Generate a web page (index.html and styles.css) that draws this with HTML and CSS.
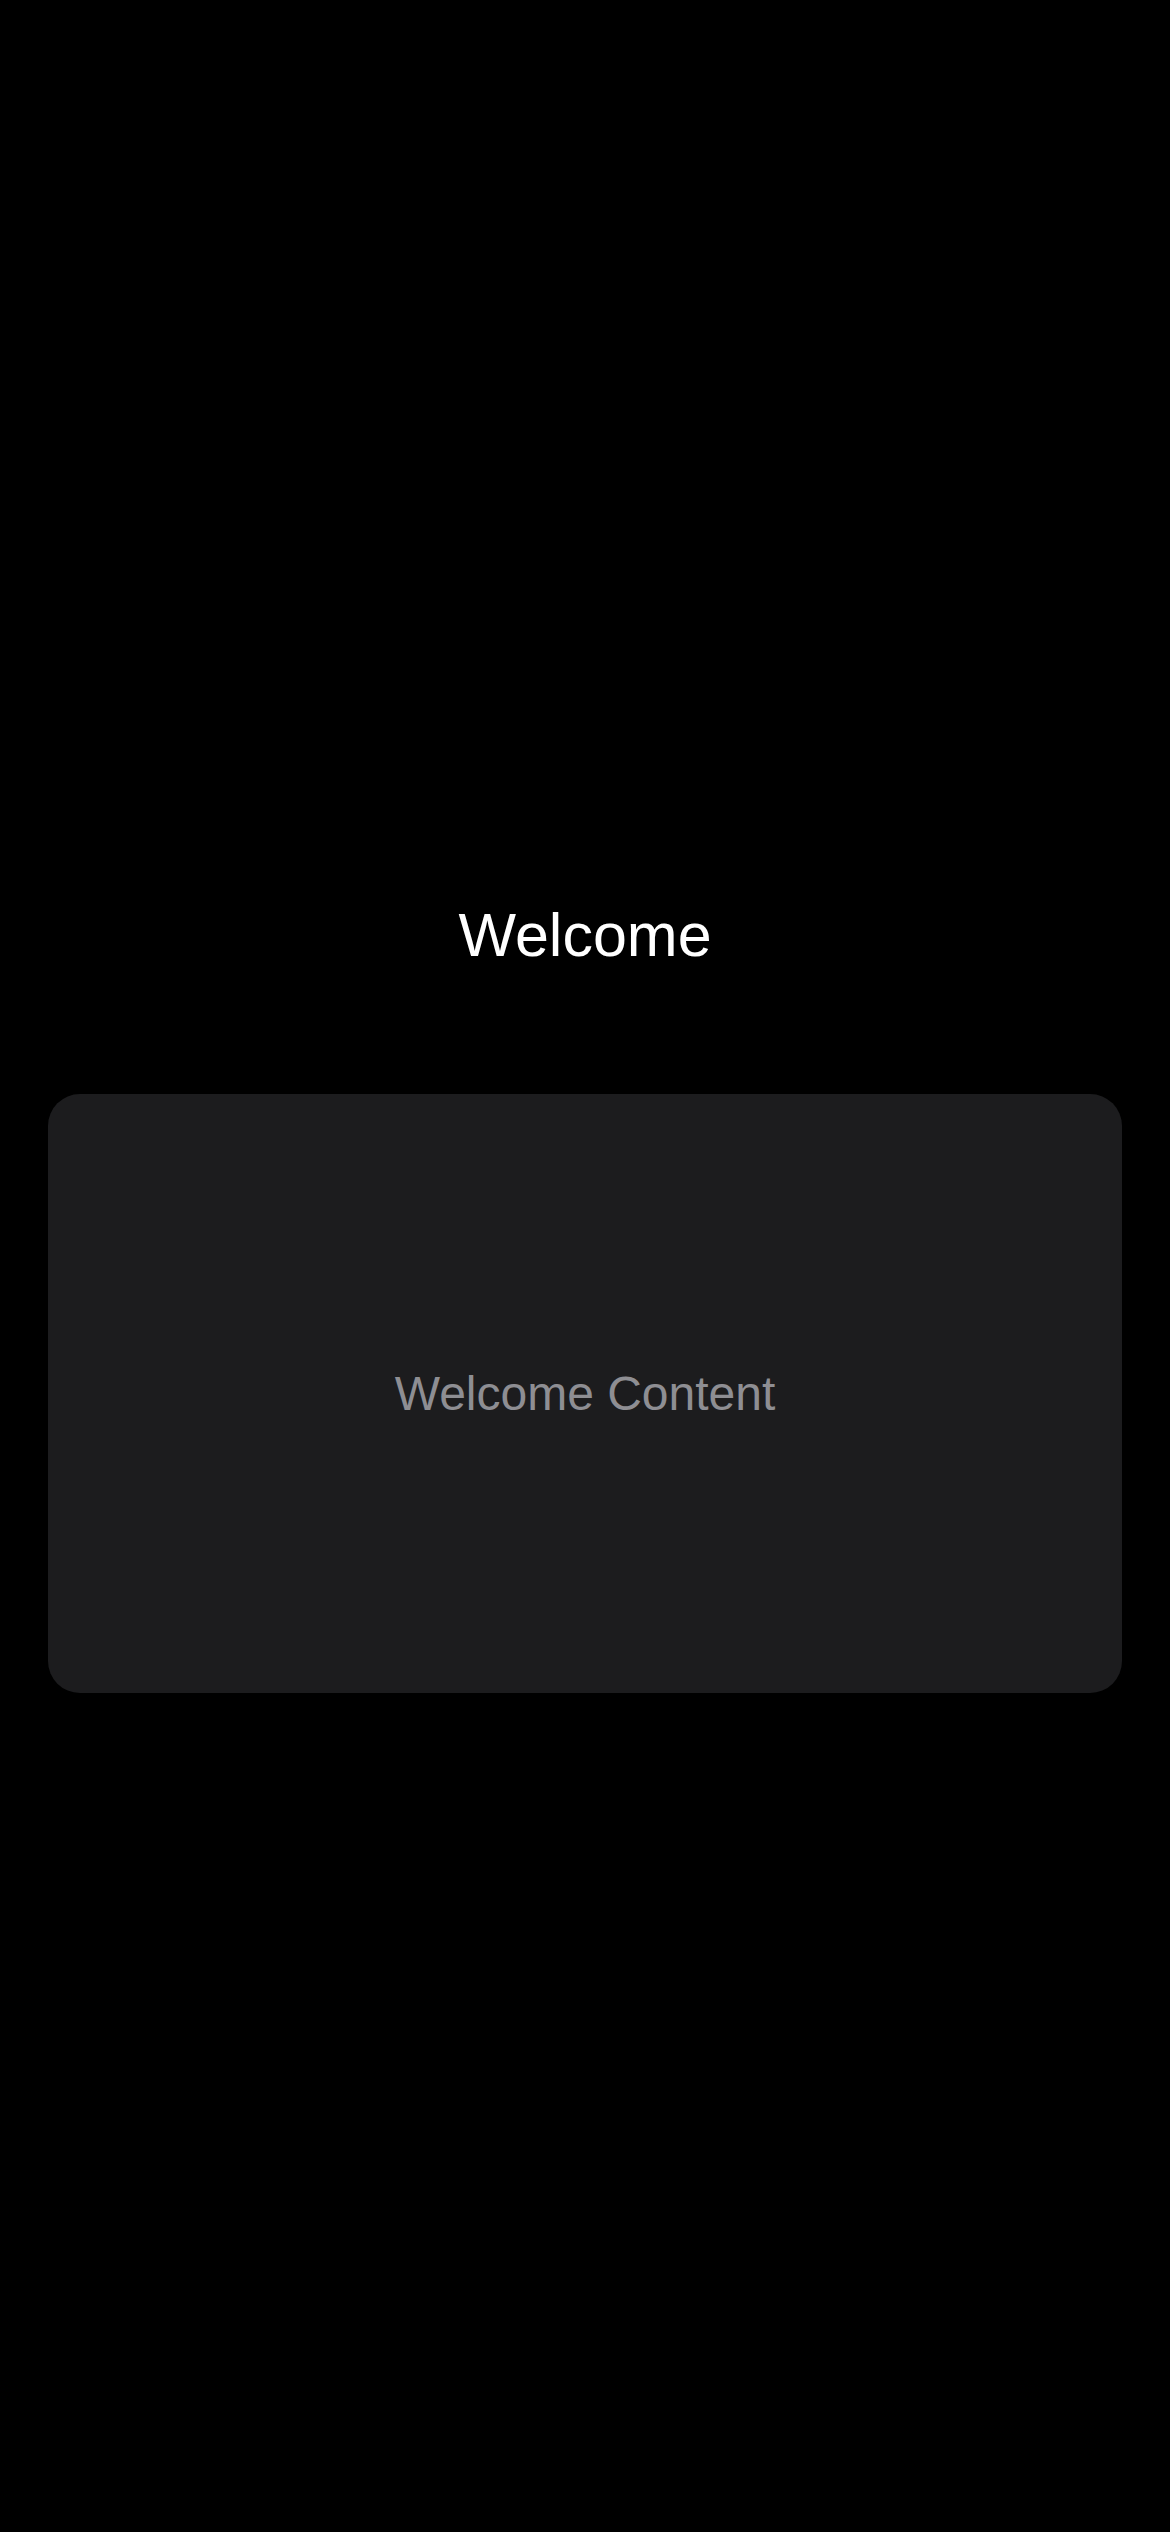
FILE: index.html
```html
<!DOCTYPE html>
<html lang="en">
<head>
<meta charset="utf-8">
<title>Welcome</title>
<link rel="stylesheet" href="styles.css">
</head>
<body>
<main class="screen">
  <h1 class="title">Welcome</h1>
  <section class="card">
    <p class="card-text">Welcome Content</p>
  </section>
</main>
</body>
</html>
```
FILE: styles.css
```css
html, body {
  margin: 0;
  padding: 0;
  background: #000000;
}
body {
  width: 1170px;
  height: 2532px;
  overflow: hidden;
  font-family: "Liberation Sans", Arial, sans-serif;
}
.screen {
  display: flex;
  flex-direction: column;
  align-items: stretch;
  padding: 898px 48px 0;
}
.title {
  margin: 0;
  font-size: 61px;
  line-height: 74px;
  font-weight: 400;
  color: #ffffff;
  text-align: center;
}
.card {
  margin-top: 122px;
  height: 599px;
  background: #1c1c1e;
  border-radius: 32px;
  display: flex;
  align-items: center;
  justify-content: center;
}
.card-text {
  margin: 0;
  font-size: 48px;
  line-height: 56px;
  color: #8e8e93;
}
```
